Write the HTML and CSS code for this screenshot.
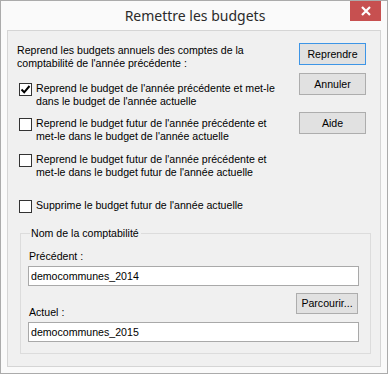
FILE: index.html
```html
<!DOCTYPE html>
<html>
<head>
  <meta charset="utf-8" />
  <title>Remettre les budgets</title>
  <link rel="stylesheet" href="styles.css">
</head>
<body>

<div class="window">
  <div class="titlebar">
    <span class="title">Remettre les budgets</span>
    <span class="close">
      <svg width="10" height="10" viewBox="0 0 10 10">
        <path d="M1 1 L9 9 M9 1 L1 9" stroke="#fff" stroke-width="2.2" />
      </svg>
    </span>
  </div>

  <div class="client">
    <div class="top">
      <div class="options">
        <div class="intro">Reprend les budgets annuels des comptes de la<br>comptabilité de l'année précédente :</div>

        <label class="check r1">
          <span class="box">
            <svg width="11" height="11" viewBox="0 0 11 11">
              <path d="M1.5 5.5 L4.2 8.3 L9.5 2" fill="none" stroke="#000" stroke-width="2" />
            </svg>
          </span>
          <span>Reprend le budget de l'année précédente et met-le<br>dans le budget de l'année actuelle</span>
        </label>

        <label class="check r2">
          <span class="box"></span>
          <span>Reprend le budget futur de l'année précédente et<br>met-le dans le budget de l'année actuelle</span>
        </label>

        <label class="check r3">
          <span class="box"></span>
          <span>Reprend le budget futur de l'année précédente et<br>met-le dans le budget futur de l'année actuelle</span>
        </label>

        <label class="check r4">
          <span class="box"></span>
          <span>Supprime le budget futur de l'année actuelle</span>
        </label>
      </div>

      <div class="buttons">
        <div class="btn default">Reprendre</div>
        <div class="btn cancel">Annuler</div>
        <div class="btn help">Aide</div>
      </div>
    </div>

    <fieldset class="group">
      <legend>Nom de la comptabilité</legend>
      <div class="field-label first">Précédent :</div>
      <div class="textbox">democommunes_2014</div>
      <div class="browse-row">
        <div class="field-label">Actuel :</div>
        <div class="btn browse">Parcourir...</div>
      </div>
      <div class="textbox">democommunes_2015</div>
    </fieldset>
  </div>
</div>

</body>
</html>
```

FILE: styles.css
```css
body {
  margin: 0;
  font-family: "Liberation Sans", Arial, sans-serif;
  font-size: 10.6px;
  line-height: 13px;
  color: #000;
}

.window {
  box-sizing: border-box;
  width: 388px;
  height: 374px;
  border: 1px solid #ababab;
  background: #fafafa;
}

.titlebar {
  position: relative;
  height: 29px;
  display: flex;
  justify-content: center;
}

.title {
  font-family: "Noto Sans", "Open Sans", sans-serif;
  font-size: 14px;
  line-height: 29px;
  color: #2b2b2b;
  padding-left: 2px;
}

.close {
  position: absolute;
  top: 0;
  right: 6px;
  width: 31px;
  height: 20px;
  background: #c75050;
  display: flex;
  align-items: center;
  justify-content: center;
}

.client {
  box-sizing: border-box;
  height: 337px;
  margin: 0 6px;
  border: 1px solid #d5d5d5;
  background: #f0f0f0;
}

.top {
  display: flex;
  justify-content: space-between;
}

.options {
  padding-left: 9px;
  white-space: nowrap;
}

.intro {
  margin-top: 13px;
}

.check {
  display: flex;
  align-items: flex-start;
  margin-left: 2px;
}

.check .box {
  box-sizing: border-box;
  width: 13px;
  height: 13px;
  margin-top: 1px;
  margin-right: 4px;
  border: 1px solid #333;
  background: #fff;
  display: flex;
  align-items: center;
  justify-content: center;
}

.r1 { margin-top: 12px; }
.r2 { margin-top: 9px; }
.r3 { margin-top: 10px; }
.r4 { margin-top: 20px; }

.buttons {
  display: flex;
  flex-direction: column;
  margin-right: 14px;
}

.btn {
  box-sizing: border-box;
  width: 67px;
  height: 22px;
  border: 1px solid #adadad;
  background: #e1e1e1;
  display: flex;
  align-items: center;
  justify-content: center;
}

.btn.default {
  margin-top: 12px;
  border-color: #3d95e6;
}

.btn.cancel {
  margin-top: 8px;
}

.btn.help {
  margin-top: 17px;
}

.group {
  box-sizing: border-box;
  width: 351px;
  margin: 14px 0 0 12px;
  padding: 0 11px 11px 7px;
  border: 1px solid #dcdcdc;
}

.group legend {
  margin-left: 2px;
  padding: 0 2px 0 1px;
  line-height: 13px;
}

.field-label {
  padding-left: 1px;
}

.field-label.first {
  margin-top: 10px;
}

.textbox {
  box-sizing: border-box;
  height: 20px;
  margin-top: 3px;
  padding-left: 2px;
  border: 1px solid #a9a9a9;
  background: #fff;
  line-height: 18px;
}

.browse-row {
  display: flex;
  justify-content: space-between;
  align-items: flex-start;
}

.browse-row .field-label {
  margin-top: 20px;
}

.btn.browse {
  width: 62px;
  height: 21px;
  margin-top: 7px;
  margin-right: 1px;
}
```
